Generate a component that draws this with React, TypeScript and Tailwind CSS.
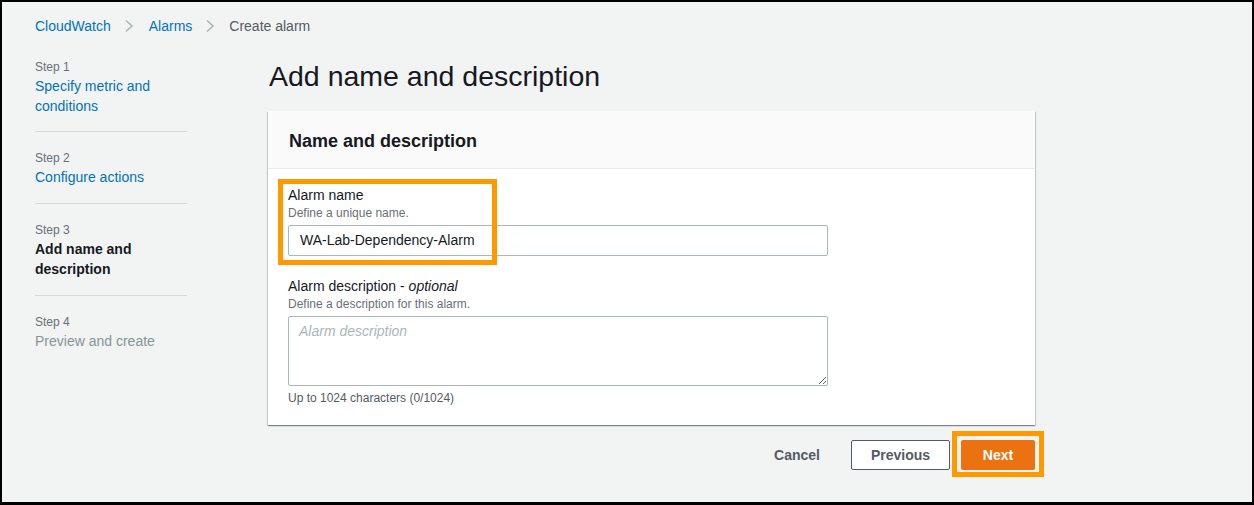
import React from "react"

function Chevron() {
  return (
    <svg width="10" height="14" viewBox="0 0 10 14" fill="none" className="shrink-0">
      <path d="M2 1.5 L8 7 L2 12.5" stroke="#aab7b8" strokeWidth="1.6" />
    </svg>
  )
}

const steps = [
  { n: "Step 1", title: "Specify metric and conditions", state: "link" },
  { n: "Step 2", title: "Configure actions", state: "link" },
  { n: "Step 3", title: "Add name and description", state: "active" },
  { n: "Step 4", title: "Preview and create", state: "disabled" },
]

export default function App() {
  return (
    <div
      className="w-[1254px] h-[505px] overflow-hidden border-2 border-b-[3px] border-black bg-[#f2f3f3] text-[#16191f]"
      style={{ fontFamily: '"Liberation Sans", Arial, sans-serif' }}
    >
      {/* Breadcrumbs */}
      <div className="flex items-center gap-[13px] pl-[33px] pt-[14px] text-[14px] leading-5">
        <span className="text-[#0073bb]">CloudWatch</span>
        <Chevron />
        <span className="text-[#0073bb] ml-[2px]">Alarms</span>
        <Chevron />
        <span className="text-[#545b64] ml-[1px]">Create alarm</span>
      </div>

      <div className="flex pl-[33px] pt-[22px]">
        {/* Wizard nav */}
        <nav className="w-[152px] shrink-0">
          {steps.map((s, i) => (
            <div
              key={s.n}
              className={
                i === 0
                  ? "pb-[15px] border-b border-[#d5dbdb]"
                  : i === steps.length - 1
                    ? "pt-[17px]"
                    : "pt-[17px] pb-[16px] border-b border-[#d5dbdb]"
              }
            >
              <div className="text-[12px] leading-[18px] text-[#687078]">{s.n}</div>
              <div
                className={
                  s.state === "active"
                    ? "text-[14px] leading-5 font-bold text-[#16191f]"
                    : s.state === "disabled"
                      ? "text-[14px] leading-5 text-[#879596]"
                      : "text-[14px] leading-5 text-[#0073bb]"
                }
              >
                {s.title}
              </div>
            </div>
          ))}
        </nav>

        {/* Main content */}
        <main className="ml-[81px] w-[767px] shrink-0">
          <h1 className="text-[28.5px] leading-9 font-normal pl-[1px]">Add name and description</h1>

          {/* Card */}
          <section className="mt-[17px] bg-white shadow-[0_1px_1px_0_rgba(0,28,36,0.3),1px_1px_1px_0_rgba(0,28,36,0.15),-1px_1px_1px_0_rgba(0,28,36,0.15)]">
            <div className="h-[58px] bg-[#fafafa] border-b border-[#eaeded] pl-[21px] pt-[19px]">
              <h2 className="text-[18px] leading-[22px] font-bold">Name and description</h2>
            </div>

            <div className="relative px-5 pt-[16px] pb-[19px]">
              {/* annotation box */}
              <div className="absolute left-[10px] top-[10px] w-[219px] h-[86px] border-[5px] border-[#ff9900]" />

              <label className="block text-[14px] leading-5">Alarm name</label>
              <div className="text-[12px] leading-4 text-[#687078]">Define a unique name.</div>
              <div className="mt-1 w-[540px] h-[31px] border border-[#aab7b8] rounded-[2px] bg-white px-[11px] flex items-center text-[14px]">
                WA-Lab-Dependency-Alarm
              </div>

              <label className="block mt-5 text-[14px] leading-5">
                Alarm description - <i>optional</i>
              </label>
              <div className="text-[12px] leading-4 text-[#687078]">Define a description for this alarm.</div>
              <textarea
                readOnly
                placeholder="Alarm description"
                className="mt-[4px] block w-[540px] h-[70px] border border-[#aab7b8] rounded-[2px] bg-white px-[10px] py-[4px] text-[14px] leading-5 placeholder:italic placeholder:text-[#aab7b8] outline-none"
              />
              <div className="mt-[4px] text-[12px] leading-4 text-[#545b64]">Up to 1024 characters (0/1024)</div>
            </div>
          </section>

          {/* Actions */}
          <div className="mt-[15px] flex items-center justify-end gap-[11px]">
            <button className="h-[30px] px-5 text-[14px] font-bold text-[#545b64]">Cancel</button>
            <button className="h-[30px] w-[99px] border border-[#545b64] rounded-[2px] bg-white text-[14px] font-bold text-[#545b64]">
              Previous
            </button>
            <div className="relative">
              <div className="absolute -left-[9px] -top-[9px] w-[92px] h-[46px] border-[5px] border-[#ff9900]" />
              <button className="relative h-[30px] w-[74px] rounded-[2px] bg-[#ec7211] text-[14px] font-bold text-white">
                Next
              </button>
            </div>
          </div>
        </main>
      </div>
    </div>
  )
}
